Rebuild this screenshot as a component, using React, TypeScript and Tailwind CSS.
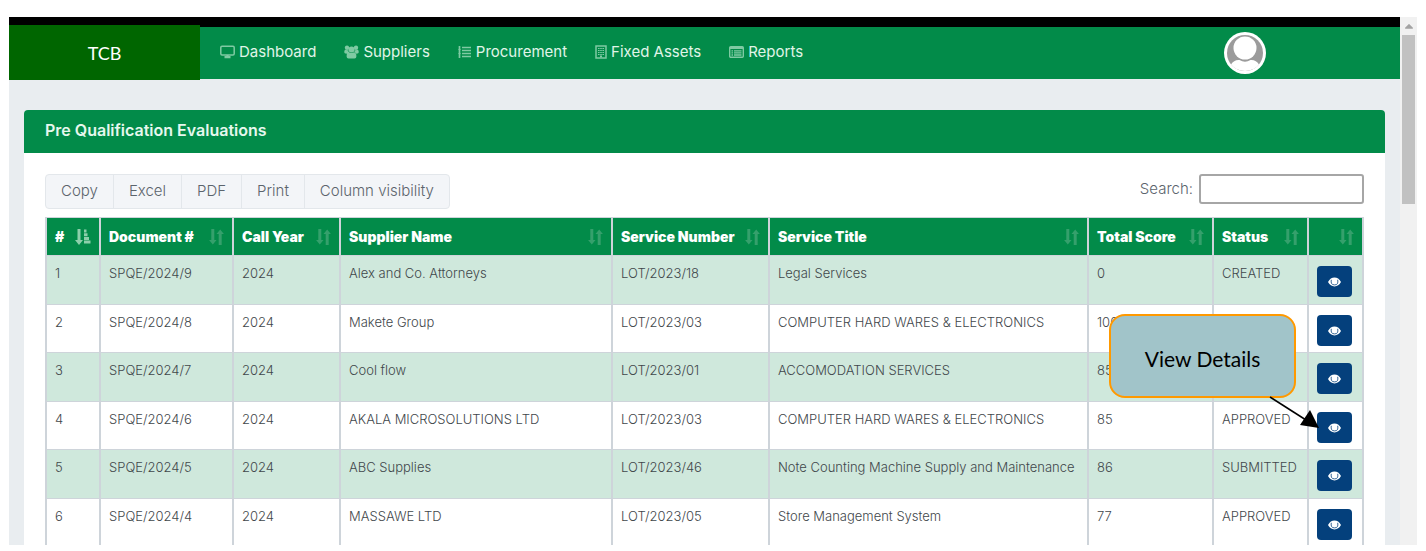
import { FaCaretUp } from 'react-icons/fa';

interface Evaluation {
  id: number;
  document: string;
  year: number;
  supplier: string;
  lot: string;
  service: string;
  score: number;
  status?: string;
}

const evaluations: Evaluation[] = [
  { id: 1, document: 'SPQE/2024/9', year: 2024, supplier: 'Alex and Co. Attorneys', lot: 'LOT/2023/18', service: 'Legal Services', score: 0, status: 'CREATED' },
  { id: 2, document: 'SPQE/2024/8', year: 2024, supplier: 'Makete Group', lot: 'LOT/2023/03', service: 'COMPUTER HARD WARES & ELECTRONICS', score: 100 },
  { id: 3, document: 'SPQE/2024/7', year: 2024, supplier: 'Cool flow', lot: 'LOT/2023/01', service: 'ACCOMODATION SERVICES', score: 85 },
  { id: 4, document: 'SPQE/2024/6', year: 2024, supplier: 'AKALA MICROSOLUTIONS LTD', lot: 'LOT/2023/03', service: 'COMPUTER HARD WARES & ELECTRONICS', score: 85, status: 'APPROVED' },
  { id: 5, document: 'SPQE/2024/5', year: 2024, supplier: 'ABC Supplies', lot: 'LOT/2023/46', service: 'Note Counting Machine Supply and Maintenance', score: 86, status: 'SUBMITTED' },
  { id: 6, document: 'SPQE/2024/4', year: 2024, supplier: 'MASSAWE LTD', lot: 'LOT/2023/05', service: 'Store Management System', score: 77, status: 'APPROVED' },
];

const columns = [
  { label: '#', width: 'w-[54px]' },
  { label: 'Document #', width: 'w-[133px]' },
  { label: 'Call Year', width: 'w-[107px]' },
  { label: 'Supplier Name', width: '' },
  { label: 'Service Number', width: 'w-[157px]' },
  { label: 'Service Title', width: 'w-[319px]' },
  { label: 'Total Score', width: 'w-[125px]' },
  { label: 'Status', width: 'w-[95px]' },
  { label: '', width: 'w-[55px]' },
];

const exportButtons = ['Copy', 'Excel', 'PDF', 'Print', 'Column visibility'];

const MonitorIcon = () => (
  <svg width="15" height="14" viewBox="0 0 15 14" fill="none" stroke="currentColor" strokeWidth="1.5">
    <rect x="0.8" y="1.3" width="13.4" height="8.7" rx="1.2" />
    <path d="M4.5 12.2h6M7.5 10v2.5" strokeWidth="2.2" />
  </svg>
);

const GroupIcon = () => (
  <svg width="15" height="14" viewBox="0 0 15 14" fill="currentColor">
    <circle cx="3" cy="2.8" r="2.2" />
    <circle cx="12" cy="2.8" r="2.2" />
    <circle cx="7.5" cy="4.5" r="3" />
    <path d="M.3 7.500V6.500Q.3 4.800 1.600 4.800q1.300.8 2.600.3Q4.300 7 5.200 7.800L3 8.600Q.3 8.800.3 7.500zM14.700 7.500V6.500Q14.700 4.800 13.400 4.800q-1.300.8-2.600.3Q10.700 7 9.800 7.800L12 8.600Q14.700 8.800 14.700 7.500zM2.600 11.500Q2.600 7.300 5 7.300q2.500 1.500 5 0 2.400 0 2.400 4.200 0 1.900-1.900 1.900H4.500q-1.900 0-1.900-1.900z" />
  </svg>
);

const ListIcon = () => (
  <svg width="14" height="14" viewBox="0 0 14 14" fill="none" stroke="currentColor" strokeWidth="1.700">
    <path d="M4 2.500h9M4 5.500h9M4 8.500h9M4 11.500h9" />
    <path d="M1.500 1v12" strokeWidth="1.700" />
    <path d="M.5 4.500h2M.5 8.500h2" strokeWidth="1" />
  </svg>
);

const BuildingIcon = () => (
  <svg width="12" height="14" viewBox="0 0 12 14" fill="none" stroke="currentColor">
    <rect x="1" y="1" width="10" height="12" strokeWidth="1.500" />
    <path d="M3 3.500h6M3 5.500h6M3 7.500h6M3 9.500h6" strokeDasharray="1.600 .6" strokeWidth="1.200" />
    <path d="M6 10.500v2" strokeWidth="2" />
  </svg>
);

const TableIcon = () => (
  <svg width="15" height="12" viewBox="0 0 15 12" fill="none" stroke="currentColor">
    <rect x="0.700" y="0.700" width="13.600" height="10.600" rx="1" strokeWidth="1.400" />
    <path d="M1 2h13" strokeWidth="2" />
    <path d="M2.500 4.800h1.500M5 4.800h7.500M2.500 6.900h1.500M5 6.900h7.500M2.500 9h1.500M5 9h7.500" strokeWidth="1.300" />
  </svg>
);

const EyeIcon = () => (
  <svg width="13" height="10" viewBox="0 0 13 10">
    <path d="M0 5Q2.500.6 6.500.6T13 5Q10.500 9.400 6.500 9.400T0 5z" fill="#fff" />
    <path d="M3.300 2.800Q2.300 7.800 6.500 7.900T9.700 2.800" fill="none" stroke="#04407c" strokeWidth=".8" />
  </svg>
);

const Avatar = () => (
  <svg width="42" height="42" viewBox="0 0 42 42">
    <circle cx="21" cy="21" r="21" fill="#fff" />
    <circle cx="21" cy="21" r="18" fill="#9b9b9b" />
    <path d="M7 32.500q3-5 8.500-4.500 5.500 3.500 11 0 5.500-.5 8.500 4.500-5 6.500-14 6.500T7 32.500z" fill="#fff" />
    <circle cx="21" cy="16" r="11.500" fill="#fff" />
  </svg>
);

const navItems = [
  { label: 'Dashboard', icon: MonitorIcon },
  { label: 'Suppliers', icon: GroupIcon },
  { label: 'Procurement', icon: ListIcon },
  { label: 'Fixed Assets', icon: BuildingIcon },
  { label: 'Reports', icon: TableIcon },
];

function Navbar() {
  return (
    <header className="bg-black pt-2">
      <div className="flex items-start">
        <a href="#" className="z-10 -mb-px flex h-[55px] w-[191px] shrink-0 items-center justify-center bg-[#006600] font-['Lato',sans-serif] text-lg text-white">
          TCB
        </a>
        <div className="mt-0.5 flex h-[52px] flex-1 items-center justify-between bg-[#028b49] pr-[134px] pl-5">
          <nav className="flex items-center gap-7 pb-0.5">
            {navItems.map(({ label, icon: Icon }) => (
              <a key={label} href="#" className="flex items-center gap-1 text-[15px] text-[#e0f5e8]">
                <span className="text-[#7fcaa3]">
                  <Icon />
                </span>
                {label}
              </a>
            ))}
          </nav>
          <button type="button" aria-label="Profile">
            <Avatar />
          </button>
        </div>
      </div>
    </header>
  );
}

function SortIcon({ active }: { active: boolean }) {
  if (active) {
    return (
      <svg className="shrink-0" width="16" height="16" viewBox="0 0 16 16" fill="#8dcfab">
        <path d="M2.500 0h3v11H8l-4 5-4-5h2.500z" />
        <path d="M9 .5h2.500v3H9zM9 4.200h3.500v3H9zM9 7.900h5v3H9zM9 11.600h6.500v3H9z" />
      </svg>
    );
  }
  return (
    <svg className="shrink-0" width="15" height="16" viewBox="0 0 15 16" fill="#35a06c">
      <path d="M2.300 0h3v11h2.200L3.800 15.500.1 11h2.200z" />
      <path d="M9.700 16h3V5h2.200L11.200.5 7.500 5h2.200z" />
    </svg>
  );
}

function Callout() {
  return (
    <div className="absolute top-[97px] right-[68px] flex h-[84px] w-[187px] items-center justify-center rounded-2xl border-2 border-[#ff9900] bg-[#a1c4c9] pt-1.5 font-['Lato',sans-serif] text-[21px] text-black">
      View Details
      <svg className="absolute top-[80px] left-[157px]" width="52" height="36" viewBox="0 0 52 36">
        <path d="M2 1l36 23" stroke="#000" strokeWidth="1.500" />
        <path d="M51 32l-19-3 10-15z" fill="#000" />
      </svg>
    </div>
  );
}

export default function App() {
  return (
    <div className="flex h-screen overflow-hidden bg-white px-[9px] pt-[17px] pb-1.5 font-['Inter',sans-serif]">
      <div className="min-w-0 flex-1 overflow-hidden bg-[#e9edf0]">
        <Navbar />
        <main className="px-[15px] pt-[31px]">
          <section className="rounded-t bg-white">
            <h1 className="rounded-t bg-[#028b49] px-[21px] pt-2 pb-[11px] text-base font-semibold text-[#e6f8ee]">
              Pre Qualification Evaluations
            </h1>
            <div className="px-[21px] pt-[21px]">
              <div className="flex items-start justify-between">
                <div className="flex divide-x divide-[#e3e7eb] rounded-sm border border-[#e3e7eb] bg-[#f3f5f8]">
                  {exportButtons.map((label) => (
                    <button key={label} type="button" className="px-[15px] pt-1.5 pb-[7px] text-[15px]/5 font-light text-[#5b646c]">
                      {label}
                    </button>
                  ))}
                </div>
                <label className="flex items-center gap-1.5 text-[15px] font-light text-[#5b646c]">
                  Search:
                  <input type="search" className="h-[30px] w-[165px] rounded-[3px] border-2 border-[#a6a6a6] bg-white px-2" />
                </label>
              </div>
              <div className="relative mt-2">
                <table className="w-full table-fixed border-collapse text-left">
                  <thead>
                    <tr className="h-[38px] bg-[#028b49]">
                      {columns.map((col, i) => (
                        <th key={i} className={`border-x-2 border-y border-[#ced4da] px-2 text-sm font-black whitespace-nowrap text-white ${col.width}`}>
                          <div className="flex items-center justify-between">
                            <span>{col.label}</span>
                            <SortIcon active={i === 0} />
                          </div>
                        </th>
                      ))}
                    </tr>
                  </thead>
                  <tbody className="text-[13px] font-light text-[#3f474b]">
                    {evaluations.map((row) => (
                      <tr key={row.id} className="h-12 align-top odd:h-[49px] odd:bg-[#cfe8dc]">
                        {[row.id, row.document, row.year, row.supplier, row.lot, row.service, row.score, row.status].map((value, i) => (
                          <td key={i} className="border-x-2 border-y border-[#ced4da] px-2 pt-2 whitespace-nowrap">
                            {value}
                          </td>
                        ))}
                        <td className="border-x-2 border-y border-[#ced4da] px-2 pt-2.5">
                          <button type="button" aria-label={`View ${row.document}`} className="flex h-[31px] w-[35px] items-center justify-center rounded-sm bg-[#04407c]">
                            <EyeIcon />
                          </button>
                        </td>
                      </tr>
                    ))}
                  </tbody>
                </table>
                <Callout />
              </div>
            </div>
          </section>
        </main>
      </div>
      <div className="flex w-[17px] flex-col items-center bg-[#f1f1f1]">
        <FaCaretUp size={14} className="my-0.5 text-[#a3a3a3]" />
        <div className="h-[32%] w-[13px] bg-[#c1c1c1]" />
      </div>
    </div>
  );
}
